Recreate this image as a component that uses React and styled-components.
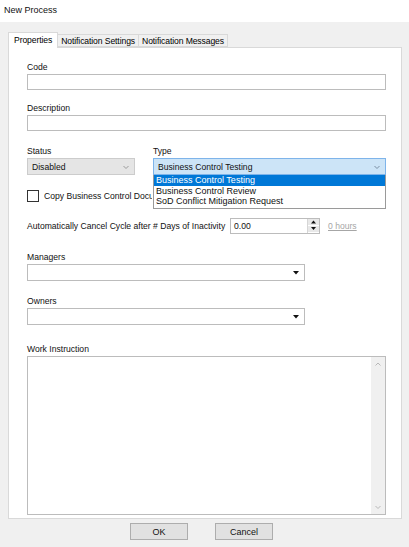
import styled, { createGlobalStyle } from 'styled-components';

const GlobalStyle = createGlobalStyle`
  html, body {
    margin: 0;
    padding: 0;
    background: #f0f0f0;
  }
  body {
    font-family: "Liberation Sans", Arial, sans-serif;
    font-size: 8.6px;
    color: #000;
  }
  * {
    box-sizing: border-box;
  }
`;

const Chevron = ({ up, color = '#9a9a9a' }) => (
  <svg width="6" height="4" viewBox="0 0 6 4">
    <polyline
      points={up ? '0.5,3.5 3,1 5.5,3.5' : '0.5,1 3,3.5 5.5,1'}
      fill="none"
      stroke={color}
      strokeWidth="1"
    />
  </svg>
);

const Triangle = ({ up, size = 5 }) => (
  <svg width={size} height={size / 2 + 1} viewBox="0 0 6 4">
    <polygon points={up ? '0,4 3,0.5 6,4' : '0,0 6,0 3,3.5'} fill="#111" />
  </svg>
);

export default function App() {
  return (
    <>
      <GlobalStyle />
      <Window>
        <TitleBar>New Process</TitleBar>
        <TabStrip>
          <Tab $active>Properties</Tab>
          <Tab>Notification Settings</Tab>
          <Tab>Notification Messages</Tab>
        </TabStrip>
        <Panel>
          <Field>
            <Label>Code</Label>
            <TextBox />
          </Field>
          <Field $top={12}>
            <Label>Description</Label>
            <TextBox />
          </Field>
          <ComboRow>
            <Field $width={108}>
              <Label>Status</Label>
              <Combo $variant="disabled">
                <span>Disabled</span>
                <Chevron />
              </Combo>
            </Field>
            <Field $width={233}>
              <Label>Type</Label>
              <Combo $variant="focused">
                <span>Business Control Testing</span>
                <Chevron color="#7a8ea3" />
              </Combo>
              <DropList>
                <DropItem $selected>Business Control Testing</DropItem>
                <DropItem>Business Control Review</DropItem>
                <DropItem>SoD Conflict Mitigation Request</DropItem>
              </DropList>
            </Field>
          </ComboRow>
          <CheckRow>
            <CheckBox />
            <CheckText>Copy Business Control Documents</CheckText>
          </CheckRow>
          <CancelRow>
            <span>Automatically Cancel Cycle after # Days of Inactivity</span>
            <Numeric>
              <span>0.00</span>
              <Spinner>
                <SpinButton>
                  <Triangle up />
                </SpinButton>
                <SpinButton>
                  <Triangle />
                </SpinButton>
              </Spinner>
            </Numeric>
            <HoursLink>0 hours</HoursLink>
          </CancelRow>
          <Field $top={17} $width={278}>
            <Label>Managers</Label>
            <Combo>
              <span />
              <Triangle size={6} />
            </Combo>
          </Field>
          <Field $top={14} $width={278}>
            <Label>Owners</Label>
            <Combo>
              <span />
              <Triangle size={6} />
            </Combo>
          </Field>
          <Field $top={18}>
            <Label>Work Instruction</Label>
            <TextArea>
              <ScrollBar>
                <Chevron up color="#b8b8b8" />
                <Chevron color="#b8b8b8" />
              </ScrollBar>
            </TextArea>
          </Field>
        </Panel>
        <ButtonRow>
          <Button>OK</Button>
          <Button>Cancel</Button>
        </ButtonRow>
      </Window>
    </>
  );
}

const Window = styled.div`
  width: 409px;
  height: 547px;
  background: #f0f0f0;
  display: flex;
  flex-direction: column;
  overflow: hidden;
`;

const TitleBar = styled.div`
  height: 22px;
  background: #fff;
  padding-left: 4px;
  font-size: 9px;
  line-height: 20px;
  color: #111;
`;

const TabStrip = styled.div`
  display: flex;
  align-items: flex-end;
  height: 15px;
  margin: 10px 0 0 8px;
`;

const Tab = styled.div`
  position: relative;
  z-index: ${({ $active }) => ($active ? 2 : 1)};
  height: ${({ $active }) => ($active ? '16px' : '13px')};
  margin-bottom: ${({ $active }) => ($active ? '-1px' : '0')};
  margin-left: ${({ $active }) => ($active ? '0' : '-1px')};
  padding: 0 ${({ $active }) => ($active ? '5px' : '3px')};
  line-height: ${({ $active }) => ($active ? '14px' : '12px')};
  background: ${({ $active }) => ($active ? '#fff' : '#f0f0f0')};
  border: 1px solid #d9d9d9;
  border-bottom: ${({ $active }) => ($active ? 'none' : '1px solid #d9d9d9')};
  white-space: nowrap;
  letter-spacing: -0.1px;

  &:first-child {
    margin-left: 0;
  }
`;

const Panel = styled.div`
  position: relative;
  width: 394px;
  height: 472px;
  margin-left: 8px;
  padding: 13px 0 0 18px;
  background: #fff;
  border: 1px solid #d9d9d9;
  display: flex;
  flex-direction: column;
`;

const Field = styled.div`
  position: relative;
  display: flex;
  flex-direction: column;
  width: ${({ $width }) => ($width ? `${$width}px` : '359px')};
  margin-top: ${({ $top }) => ($top ? `${$top}px` : '0')};
`;

const Label = styled.label`
  display: block;
  line-height: 12px;
  margin-bottom: 1px;
  color: #111;
`;

const TextBox = styled.div`
  height: 16px;
  border: 1px solid #bcbcbc;
  background: #fff;
`;

const ComboRow = styled.div`
  display: flex;
  gap: 18px;
  margin-top: 14px;
  position: relative;
  z-index: 3;
`;

const comboColors = {
  disabled: { bg: '#e5e5e5', border: '#cccccc' },
  focused: { bg: '#cce4f7', border: '#7eb4ea' },
  normal: { bg: '#fff', border: '#bcbcbc' },
};

const Combo = styled.div`
  display: flex;
  align-items: center;
  justify-content: space-between;
  height: 17px;
  padding: 0 5px 0 4px;
  background: ${({ $variant = 'normal' }) => comboColors[$variant].bg};
  border: 1px solid ${({ $variant = 'normal' }) => comboColors[$variant].border};
  color: #111;
`;

const DropList = styled.div`
  position: absolute;
  top: 30px;
  left: 0;
  width: 233px;
  background: #fff;
  border: 1px solid #9a9a9a;
  border-top: none;
  padding-bottom: 1px;
`;

const DropItem = styled.div`
  line-height: 10.5px;
  padding-left: 2px;
  font-size: 9px;
  background: ${({ $selected }) => ($selected ? '#0078d7' : 'transparent')};
  color: ${({ $selected }) => ($selected ? '#fff' : '#111')};
`;

const CheckRow = styled.div`
  display: flex;
  align-items: center;
  gap: 5px;
  height: 13px;
  margin-top: 14px;
  white-space: nowrap;
  color: #111;
`;

const CheckBox = styled.span`
  width: 12px;
  height: 12px;
  border: 1px solid #333;
  background: #fff;
  flex: none;
`;

const CheckText = styled.span`
  width: 108px;
  overflow: hidden;
`;

const CancelRow = styled.div`
  display: flex;
  align-items: center;
  height: 16px;
  margin-top: 16px;
  white-space: nowrap;
  color: #111;

  > span:first-child {
    width: 203px;
  }
`;

const Numeric = styled.div`
  display: flex;
  align-items: center;
  justify-content: space-between;
  width: 90px;
  height: 16px;
  padding-left: 3px;
  border: 1px solid #bcbcbc;
  background: #fff;
`;

const Spinner = styled.div`
  display: flex;
  flex-direction: column;
  width: 12px;
  height: 14px;
  border-left: 1px solid #d6d6d6;
`;

const SpinButton = styled.div`
  flex: 1;
  display: flex;
  align-items: center;
  justify-content: center;
  background: #e8e8e8;
  border-bottom: 1px solid #fff;
`;

const HoursLink = styled.span`
  margin-left: 8px;
  color: #a6a6a6;
  text-decoration: underline;
`;

const TextArea = styled.div`
  display: flex;
  justify-content: flex-end;
  height: 159px;
  border: 1px solid #bcbcbc;
  background: #fff;
`;

const ScrollBar = styled.div`
  width: 14px;
  background: #f0f0f0;
  display: flex;
  flex-direction: column;
  align-items: center;
  justify-content: space-between;
  padding: 5px 0 5px;
`;

const ButtonRow = styled.div`
  display: flex;
  gap: 27px;
  margin: 4px 0 0 130px;
`;

const Button = styled.button`
  width: 58px;
  height: 17px;
  padding: 0;
  font-family: inherit;
  font-size: 9px;
  color: #111;
  background: #e1e1e1;
  border: 1px solid #adadad;
`;
